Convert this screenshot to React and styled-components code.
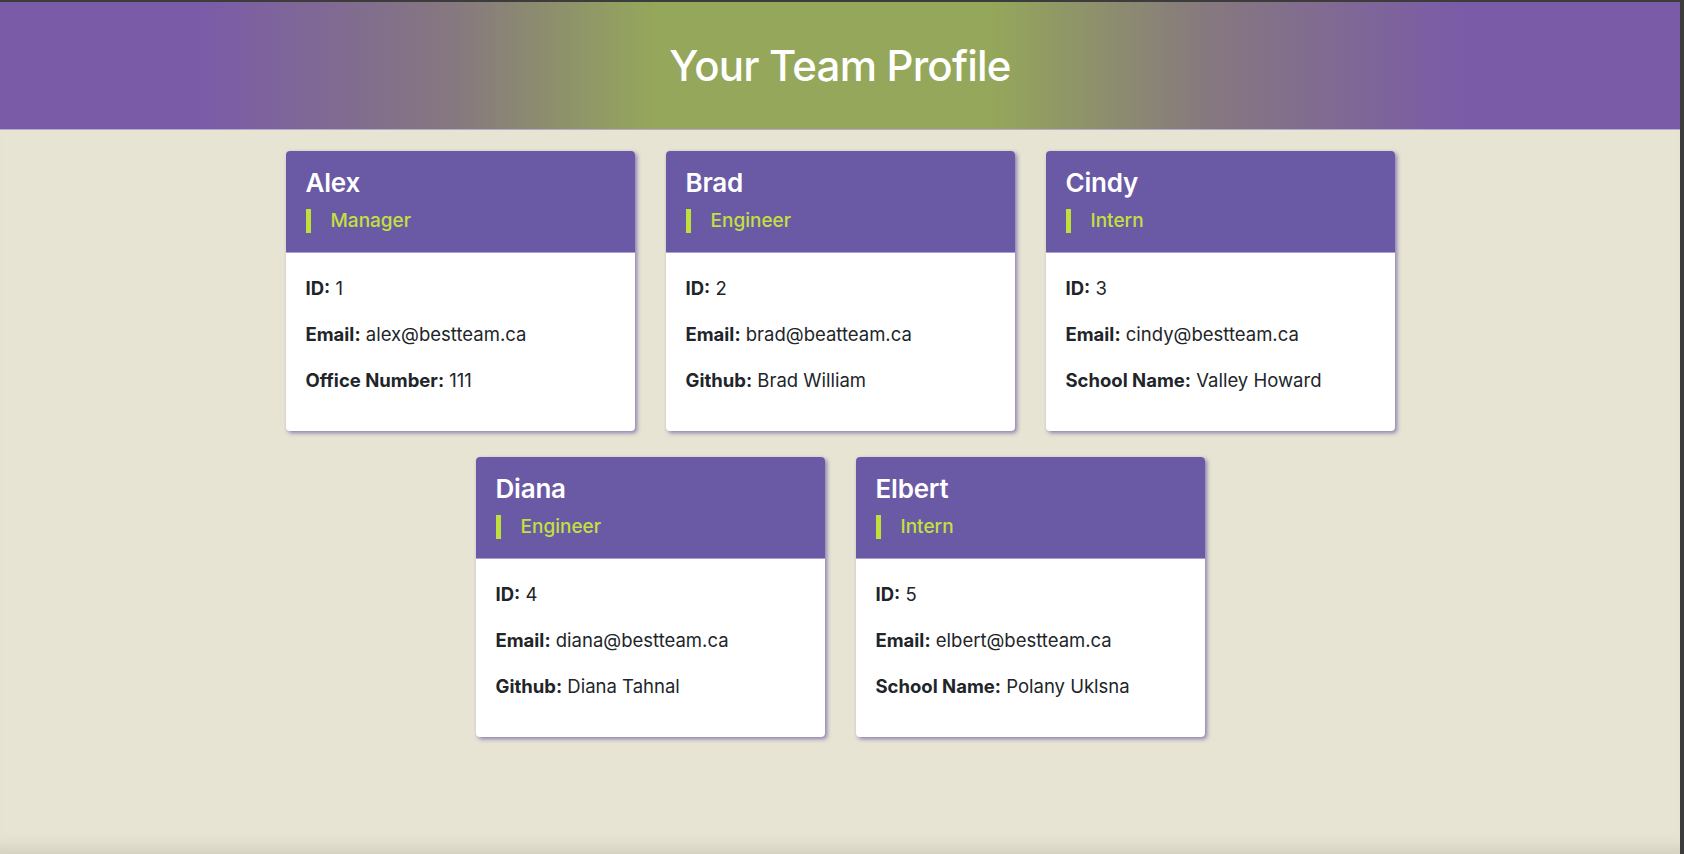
import React from 'react';
import styled, { createGlobalStyle } from 'styled-components';

const GlobalStyle = createGlobalStyle`
  html, body {
    margin: 0;
    padding: 0;
  }
  body {
    background-color: #e7e4d4;
    font-family: Inter, "Noto Sans", sans-serif;
    color: #212529;
    min-height: 854px;
    box-sizing: border-box;
    border-top: 2px solid #3c3c3c;
    border-right: 4px solid #3c3c3c;
  }
`;

const Page = styled.div`
  display: flex;
  flex-direction: column;
  min-height: 852px;
  box-shadow: inset 0 -18px 16px -12px rgba(120, 110, 90, 0.18);
`;

const Banner = styled.header`
  display: flex;
  align-items: center;
  justify-content: center;
  height: 127px;
  border-bottom: 1px solid #b6a9cc;
  background: linear-gradient(
    90deg,
    #7a5ba8 12%,
    #86787f 27%,
    #95a75a 39%,
    #95a75a 59%,
    #86787f 72%,
    #7a5ba8 87%
  );
`;

const Title = styled.h1`
  margin: 0;
  color: #ffffff;
  font-size: 42px;
  font-weight: 500;
  letter-spacing: -0.8px;
`;

const Grid = styled.main`
  display: flex;
  flex-wrap: wrap;
  justify-content: center;
  column-gap: 31px;
  row-gap: 26px;
  max-width: 1120px;
  margin: 21px auto 0;
`;

const Card = styled.section`
  width: 349px;
  background: #ffffff;
  border-radius: 4px;
  overflow: hidden;
  box-shadow: 2px 2px 4px rgba(106, 89, 165, 0.75);
`;

const CardHead = styled.div`
  background: #6a59a5;
  padding: 16px 20px 19px;
  border-bottom: 1px solid #a99fcb;
`;

const Name = styled.h2`
  margin: 0 0 11px;
  color: #ffffff;
  font-size: 26px;
  font-weight: 600;
  line-height: 31px;
  letter-spacing: -0.2px;
`;

const Role = styled.div`
  border-left: 5px solid #bfdf3a;
  padding-left: 20px;
  color: #c3e03e;
  font-size: 19px;
  font-weight: 500;
  line-height: 24px;
`;

const CardBody = styled.div`
  padding: 21px 20px 0;
`;

const Line = styled.p`
  margin: 0 0 18px;
  font-size: 18.5px;
  line-height: 28px;

  &:last-child {
    margin-bottom: 37px;
  }

  b {
    font-weight: 700;
  }
`;

const team = [
  {
    name: 'Alex',
    role: 'Manager',
    id: 1,
    email: 'alex@bestteam.ca',
    extra: ['Office Number', '111'],
  },
  {
    name: 'Brad',
    role: 'Engineer',
    id: 2,
    email: 'brad@beatteam.ca',
    extra: ['Github', 'Brad William'],
  },
  {
    name: 'Cindy',
    role: 'Intern',
    id: 3,
    email: 'cindy@bestteam.ca',
    extra: ['School Name', 'Valley Howard'],
  },
  {
    name: 'Diana',
    role: 'Engineer',
    id: 4,
    email: 'diana@bestteam.ca',
    extra: ['Github', 'Diana Tahnal'],
  },
  {
    name: 'Elbert',
    role: 'Intern',
    id: 5,
    email: 'elbert@bestteam.ca',
    extra: ['School Name', 'Polany Uklsna'],
  },
];

const EmployeeCard = ({ member }) => (
  <Card>
    <CardHead>
      <Name>{member.name}</Name>
      <Role>{member.role}</Role>
    </CardHead>
    <CardBody>
      <Line>
        <b>ID:</b> {member.id}
      </Line>
      <Line>
        <b>Email:</b> {member.email}
      </Line>
      <Line>
        <b>{member.extra[0]}:</b> {member.extra[1]}
      </Line>
    </CardBody>
  </Card>
);

export default function App() {
  return (
    <Page>
      <GlobalStyle />
      <Banner>
        <Title>Your Team Profile</Title>
      </Banner>
      <Grid>
        {team.map(member => (
          <EmployeeCard key={member.id} member={member} />
        ))}
      </Grid>
    </Page>
  );
}
